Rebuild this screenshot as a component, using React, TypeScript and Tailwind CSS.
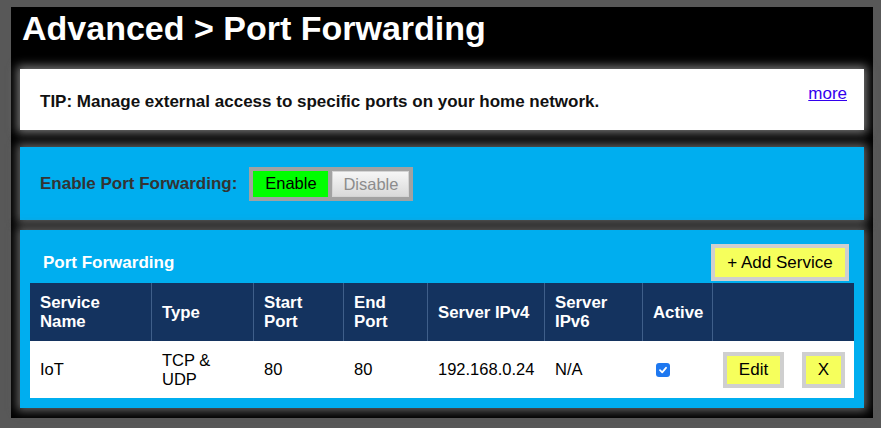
import React from 'react'

const font = { fontFamily: '"Liberation Sans", Arial, Helvetica, sans-serif' }

const columns = [
  { label: 'Service Name', w: 'w-[122px]', lines: ['Service', 'Name'] },
  { label: 'Type', w: 'w-[102px]', lines: ['Type'] },
  { label: 'Start Port', w: 'w-[90px]', lines: ['Start', 'Port'] },
  { label: 'End Port', w: 'w-[84px]', lines: ['End', 'Port'] },
  { label: 'Server IPv4', w: 'w-[117px]', lines: ['Server IPv4'] },
  { label: 'Server IPv6', w: 'w-[98px]', lines: ['Server', 'IPv6'] },
  { label: 'Active', w: 'w-[70px]', lines: ['Active'] },
  { label: '', w: 'w-[141px]', lines: [] },
]

function Checkbox() {
  return (
    <span className="flex h-[14px] w-[14px] items-center justify-center rounded-[3px] bg-[#1e78f0]">
      <svg width="10" height="10" viewBox="0 0 10 10">
        <path d="M2 5.2 L4.2 7.3 L8 2.8" fill="none" stroke="#fff" strokeWidth="1.8" strokeLinecap="round" strokeLinejoin="round" />
      </svg>
    </span>
  )
}

function YellowButton({ children, className }: { children: React.ReactNode; className: string }) {
  return (
    <button
      type="button"
      className={`flex items-center justify-center border-4 border-[#cfcfcf] bg-[#f6ff5c] text-[17px] text-black ${className}`}
    >
      {children}
    </button>
  )
}

export default function App() {
  return (
    <div className="h-[428px] w-[881px] overflow-hidden bg-[#585858] pl-[11px] pt-[7px]" style={font}>
      <div className="flex h-[411px] w-[862px] flex-col bg-black px-[9px]">
        {/* Title */}
        <h1 className="mt-[2px] pl-[2px] text-[34px] font-bold leading-[38px] text-white">
          Advanced &gt; Port Forwarding
        </h1>

        {/* Tip */}
        <div className="mt-[22px] flex h-[61px] justify-between bg-white pl-[20px] pr-[17px] shadow-[0_0_9px_3px_rgba(140,140,140,0.85)]">
          <p className="mt-[23px] text-[17px] font-bold leading-[19px] text-[#111]">
            TIP: Manage external access to specific ports on your home network.
          </p>
          <a href="#" className="mt-[15px] text-[17px] leading-[19px] text-[#3300ee] underline">
            more
          </a>
        </div>

        {/* Enable toggle */}
        <div className="mt-[17px] flex h-[73px] items-center gap-[12px] bg-[#00aeef] pl-[20px] shadow-[0_0_9px_3px_rgba(110,110,110,0.9)]">
          <span className="text-[17px] font-bold text-[#333]">Enable Port Forwarding:</span>
          <div className="flex gap-[4px] bg-[#a2a2a2] p-[4px]">
            <button type="button" className="h-[26px] w-[75px] bg-[#00ff00] text-[16.5px] text-black">
              Enable
            </button>
            <button
              type="button"
              className="h-[26px] w-[77px] border border-[#d4d4d4] bg-gradient-to-b from-[#f6f6f6] to-[#dadada] text-[16.5px] text-[#8c8c8c]"
            >
              Disable
            </button>
          </div>
        </div>

        {/* Port forwarding table */}
        <div className="mt-[10px] flex h-[178px] flex-col bg-[#00aeef] px-[10px] shadow-[0_0_9px_3px_rgba(110,110,110,0.9)]">
          <div className="mt-[14px] flex items-center justify-between pl-[13px] pr-[5px]">
            <span className="text-[17px] font-bold text-white">Port Forwarding</span>
            <YellowButton className="h-[37px] w-[138px]">+ Add Service</YellowButton>
          </div>

          <div className="mt-[2px] flex h-[58px] bg-[#14335f]">
            {columns.map((c, i) => (
              <div
                key={c.label + i}
                className={`flex flex-col justify-center px-[10px] text-[16.8px] font-bold leading-[19px] text-white ${c.w} ${
                  i < columns.length - 1 ? 'border-r border-[#3f5f8a]' : ''
                }`}
              >
                {c.lines.map((l) => (
                  <span key={l}>{l}</span>
                ))}
              </div>
            ))}
          </div>

          <div className="flex h-[57px] items-center bg-white text-[16.5px] leading-[19px] text-black">
            <div className="w-[122px] px-[10px]">IoT</div>
            <div className="w-[102px] px-[10px]">
              TCP &amp;
              <br />
              UDP
            </div>
            <div className="w-[90px] px-[10px]">80</div>
            <div className="w-[84px] px-[10px]">80</div>
            <div className="w-[117px] px-[10px]">192.168.0.24</div>
            <div className="w-[98px] px-[10px]">N/A</div>
            <div className="flex w-[70px] pl-[13px]">
              <Checkbox />
            </div>
            <div className="flex w-[141px] justify-between pl-[10px] pr-[9px]">
              <YellowButton className="h-[36px] w-[61px]">Edit</YellowButton>
              <YellowButton className="h-[36px] w-[43px]">X</YellowButton>
            </div>
          </div>
        </div>
      </div>
    </div>
  )
}
